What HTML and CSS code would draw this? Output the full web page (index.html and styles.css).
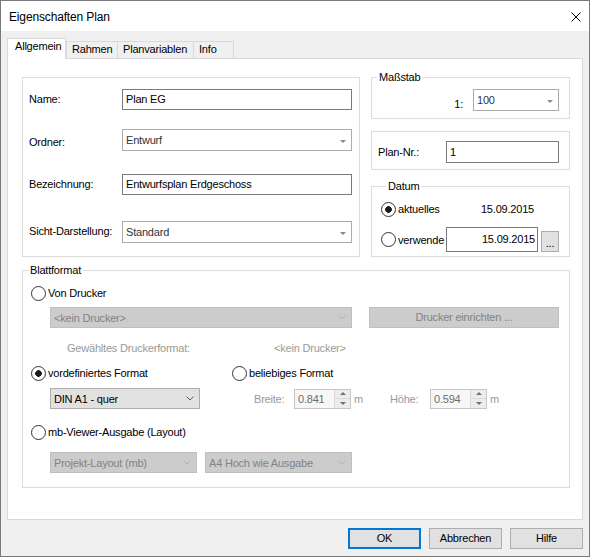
FILE: index.html
```html
<!DOCTYPE html>
<html lang="de">
<head>
  <meta charset="UTF-8">
  <title>Eigenschaften Plan</title>
  <link rel="stylesheet" href="styles.css">
</head>
<body>
  <div class="window">
    <div class="titlebar">
      <span class="title">Eigenschaften Plan</span>
      <svg class="close" width="10" height="10" viewBox="0 0 10 10">
        <path d="M0.5 0.5 L9.5 9.5 M9.5 0.5 L0.5 9.5" stroke="#000" fill="none"/>
      </svg>
    </div>

    <div class="client">
      <div class="tabs">
        <div class="tab active tab-general">Allgemein</div>
        <div class="tab tab-frame">Rahmen</div>
        <div class="tab tab-vars">Planvariablen</div>
        <div class="tab tab-info">Info</div>
      </div>

      <div class="panel">
        <div class="top">
          <!-- Name / Ordner / Bezeichnung / Sicht -->
          <div class="group general">
            <label class="lbl">Name:</label>
            <div class="edit">Plan EG</div>
            <label class="lbl lbl-low">Ordner:</label>
            <div class="combo"><span>Entwurf</span></div>
            <label class="lbl">Bezeichnung:</label>
            <div class="edit">Entwurfsplan Erdgeschoss</div>
            <label class="lbl">Sicht-Darstellung:</label>
            <div class="combo"><span>Standard</span></div>
          </div>

          <div class="side">
            <div class="group scale">
              <div class="caption">Maßstab</div>
              <div class="scale-row">
                <span class="scale-prefix">1:</span>
                <div class="combo scale-combo"><span>100</span></div>
              </div>
            </div>

            <div class="group plan-no">
              <label class="plan-lbl">Plan-Nr.:</label>
              <div class="edit plan-edit">1</div>
            </div>

            <div class="group date">
              <div class="caption">Datum</div>
              <div class="date-row">
                <span class="radio on">aktuelles</span>
                <span class="date-now">15.09.2015</span>
              </div>
              <div class="date-row date-row-edit">
                <span class="radio">verwende</span>
                <div class="edit date-edit">15.09.2015</div>
                <div class="btn dots">...</div>
              </div>
            </div>
          </div>
        </div>

        <!-- Blattformat -->
        <div class="group sheet">
          <div class="caption">Blattformat</div>
          <div class="sheet-body">
            <div class="radio opt-printer">Von Drucker</div>

            <div class="sheet-row row-printer">
              <div class="combo flat off printer-combo">
                <span>&lt;kein Drucker&gt;</span>
                <svg class="chevron" width="8" height="5" viewBox="0 0 8 5"><polyline points="0.5,0.5 4,4 7.5,0.5"/></svg>
              </div>
              <div class="btn off printer-btn">Drucker einrichten ...</div>
            </div>

            <div class="sheet-row row-info">
              <span class="muted info-lbl">Gewähltes Druckerformat:</span>
              <span class="muted">&lt;kein Drucker&gt;</span>
            </div>

            <div class="sheet-row row-opts">
              <span class="radio on opt-fixed">vordefiniertes Format</span>
              <span class="radio">beliebiges Format</span>
            </div>

            <div class="sheet-row row-size">
              <div class="combo flat size-combo">
                <span>DIN A1 - quer</span>
                <svg class="chevron" width="8" height="5" viewBox="0 0 8 5"><polyline points="0.5,0.5 4,4 7.5,0.5"/></svg>
              </div>
              <span class="muted dim-lbl dim-width">Breite:</span>
              <div class="spin">
                <span class="spin-val">0.841</span>
                <span class="spin-btns"><i class="up"></i><i class="down"></i></span>
              </div>
              <span class="muted unit">m</span>
              <span class="muted dim-lbl">Höhe:</span>
              <div class="spin">
                <span class="spin-val">0.594</span>
                <span class="spin-btns"><i class="up"></i><i class="down"></i></span>
              </div>
              <span class="muted unit">m</span>
            </div>

            <div class="radio opt-viewer">mb-Viewer-Ausgabe (Layout)</div>

            <div class="sheet-row row-layout">
              <div class="combo flat off layout-combo">
                <span>Projekt-Layout (mb)</span>
                <svg class="chevron" width="8" height="5" viewBox="0 0 8 5"><polyline points="0.5,0.5 4,4 7.5,0.5"/></svg>
              </div>
              <div class="combo flat off layout-combo layout-combo-2">
                <span>A4 Hoch wie Ausgabe</span>
                <svg class="chevron" width="8" height="5" viewBox="0 0 8 5"><polyline points="0.5,0.5 4,4 7.5,0.5"/></svg>
              </div>
            </div>
          </div>
        </div>
      </div>

      <div class="buttons">
        <div class="btn default">OK</div>
        <div class="btn">Abbrechen</div>
        <div class="btn">Hilfe</div>
      </div>
    </div>
  </div>
</body>
</html>
```

FILE: styles.css
```css
:root {
  --face: #f0f0f0;
  --tab-border: #d9d9d9;
  --group-border: #dcdcdc;
  --edit-border: #7a7a7a;
  --combo-border: #acacac;
  --btn-face: #e1e1e1;
  --btn-border: #adadad;
  --off-face: #cccccc;
  --off-border: #bfbfbf;
  --off-text: #838383;
  --muted: #999999;
  --accent: #0078d7;
}

* {
  margin: 0;
  padding: 0;
  box-sizing: border-box;
}

body {
  font-family: "Liberation Sans", Arial, sans-serif;
  font-size: 11px;
  letter-spacing: -0.2px;
  color: #000;
  background: #fff;
}

.window {
  width: 590px;
  height: 557px;
  border: 1px solid #7a7a7a;
  background: var(--face);
  display: flex;
  flex-direction: column;
}

/* title bar */
.titlebar {
  height: 30px;
  background: #fff;
  display: flex;
  align-items: center;
  justify-content: space-between;
  padding: 1px 8px 0 8px;
}

.title {
  font-size: 12px;
  letter-spacing: -0.15px;
}

.close {
  display: block;
}

/* client area */
.client {
  flex: 1;
  display: flex;
  flex-direction: column;
  padding: 7px 6px 7px 6px;
}

.tabs {
  display: flex;
  align-items: flex-end;
  height: 20px;
}

.tab {
  height: 17px;
  line-height: 15px;
  padding-left: 5px;
  border: 1px solid var(--tab-border);
  border-bottom: 0;
  border-right: 0;
  background: var(--face);
}

.tab.active {
  position: relative;
  height: 21px;
  margin-bottom: -1px;
  padding-left: 7px;
  border-right: 1px solid var(--tab-border);
  background: #fff;
}

.tab-general { width: 59px; }
.tab-frame { width: 51px; }
.tab-vars { width: 76px; }
.tab-info { width: 41px; border-right: 1px solid var(--tab-border); }

.panel {
  flex: 1;
  background: #fff;
  border: 1px solid var(--tab-border);
  padding: 18px 12px 0 14px;
}

.top {
  display: grid;
  grid-template-columns: 338px 199px;
  column-gap: 11px;
}

.group {
  border: 1px solid var(--group-border);
}

.caption {
  width: fit-content;
  margin: -7px 0 0 5px;
  padding: 0 2px;
  line-height: 13px;
  background: #fff;
}

/* controls */
.edit {
  height: 21px;
  line-height: 19px;
  padding: 0 3px;
  border: 1px solid var(--edit-border);
  background: #fff;
  white-space: nowrap;
}

.combo {
  height: 22px;
  display: flex;
  align-items: center;
  justify-content: space-between;
  padding: 0 5px 0 3px;
  border: 1px solid var(--combo-border);
  background: #fff;
  color: #333;
  white-space: nowrap;
}

.combo::after {
  content: "";
  margin-top: 2px;
  border-left: 3px solid transparent;
  border-right: 3px solid transparent;
  border-top: 3px solid #8a8a8a;
}

.combo.flat {
  height: 21px;
  background: var(--btn-face);
  border-color: var(--btn-border);
  color: #000;
}

.combo.flat::after {
  display: none;
}

.combo.off {
  background: var(--off-face);
  border-color: var(--off-border);
  color: var(--off-text);
}

.chevron {
  display: block;
  fill: none;
  stroke: #606060;
}

.off .chevron {
  stroke: #b4b4b4;
}

.btn {
  height: 21px;
  line-height: 19px;
  text-align: center;
  border: 1px solid var(--btn-border);
  background: var(--btn-face);
}

.btn.off {
  background: var(--off-face);
  border-color: var(--off-border);
  color: var(--off-text);
}

.radio {
  display: flex;
  align-items: center;
  height: 16px;
  white-space: nowrap;
}

.radio::before {
  content: "";
  flex: none;
  width: 13px;
  height: 13px;
  margin-right: 2px;
  border: 1px solid #333;
  border-radius: 50%;
  background: #fff;
}

.radio.on::before {
  background: radial-gradient(circle, #1a1a1a 0 3px, #fff 3.6px);
}

.muted {
  color: var(--muted);
}

/* left group */
.general {
  height: 180px;
  padding: 11px 7px 0 6px;
  display: grid;
  grid-template-columns: 93px 230px;
  grid-template-rows: 40px 45px 47px 22px;
  align-items: start;
}

.lbl {
  line-height: 21px;
  white-space: nowrap;
}

.lbl-low {
  padding-top: 3px;
}

/* right column */
.side {
  display: flex;
  flex-direction: column;
}

.scale {
  height: 42px;
}

.scale-row {
  display: flex;
  justify-content: flex-end;
  align-items: flex-start;
  gap: 10px;
  margin-top: 5px;
  padding-right: 10px;
}

.scale-prefix {
  line-height: 13px;
  margin-top: 9px;
}

.scale-combo {
  width: 86px;
}

.plan-no {
  height: 39px;
  margin-top: 12px;
  padding: 9px 10px 0 6px;
  display: flex;
}

.plan-lbl {
  width: 68px;
  line-height: 22px;
}

.plan-edit {
  width: 113px;
  height: 22px;
  line-height: 20px;
}

.date {
  height: 71px;
  margin-top: 16px;
  padding-left: 9px;
}

.date-row {
  display: flex;
  align-items: center;
  height: 20px;
  margin-top: 6px;
}

.date-row .radio {
  width: 65px;
}

.date-now {
  width: 92px;
  padding-right: 4px;
  text-align: right;
}

.date-row-edit {
  height: 25px;
  margin-top: 8px;
}

.date-edit {
  width: 92px;
  height: 25px;
  line-height: 23px;
  padding-right: 2px;
  text-align: right;
}

.dots {
  width: 18px;
  height: 21px;
  margin-left: 3px;
  align-self: flex-end;
  line-height: 22px;
}

/* Blattformat */
.sheet {
  height: 218px;
  margin-top: 13px;
}

.sheet-body {
  padding-left: 8px;
}

.sheet-row {
  display: flex;
  align-items: center;
}

.opt-printer {
  margin-top: 8px;
}

.row-printer {
  margin-top: 6px;
}

.printer-combo {
  width: 302px;
  margin-left: 19px;
}

.printer-btn {
  width: 190px;
  margin-left: 17px;
}

.row-info {
  height: 14px;
  margin-top: 13px;
}

.info-lbl {
  width: 207px;
  margin-left: 36px;
}

.row-opts {
  height: 16px;
  margin-top: 10px;
}

.opt-fixed {
  width: 201px;
}

.row-size {
  height: 21px;
  margin-top: 7px;
}

.size-combo {
  width: 150px;
  margin-left: 19px;
}

.dim-lbl {
  width: 40px;
}

.dim-width {
  margin-left: 54px;
}

.unit {
  width: 39px;
  padding-left: 3px;
}

.spin {
  width: 57px;
  height: 20px;
  display: flex;
  border: 1px solid #c6c6c6;
  background: #f7f7f7;
  color: #6d6d6d;
}

.spin-val {
  flex: 1;
  padding-left: 3px;
  line-height: 18px;
}

.spin-btns {
  width: 16px;
  display: flex;
  flex-direction: column;
  border-left: 1px solid #dadada;
}

.spin-btns i {
  flex: 1;
  display: flex;
  align-items: center;
  justify-content: center;
  background: #ececec;
}

.spin-btns i + i {
  border-top: 1px solid #dadada;
}

.spin-btns i::after {
  content: "";
  border-left: 3px solid transparent;
  border-right: 3px solid transparent;
}

.spin-btns .up::after {
  border-bottom: 3px solid #707070;
}

.spin-btns .down::after {
  border-top: 3px solid #707070;
}

.opt-viewer {
  margin-top: 15px;
}

.row-layout {
  margin-top: 12px;
}

.layout-combo {
  width: 147px;
  margin-left: 19px;
}

.layout-combo-2 {
  margin-left: 8px;
}

/* dialog buttons */
.buttons {
  display: flex;
  justify-content: flex-end;
  gap: 8px;
  margin-top: 8px;
}

.buttons .btn {
  width: 73px;
}

.btn.default {
  border: 2px solid var(--accent);
  line-height: 17px;
}
```
